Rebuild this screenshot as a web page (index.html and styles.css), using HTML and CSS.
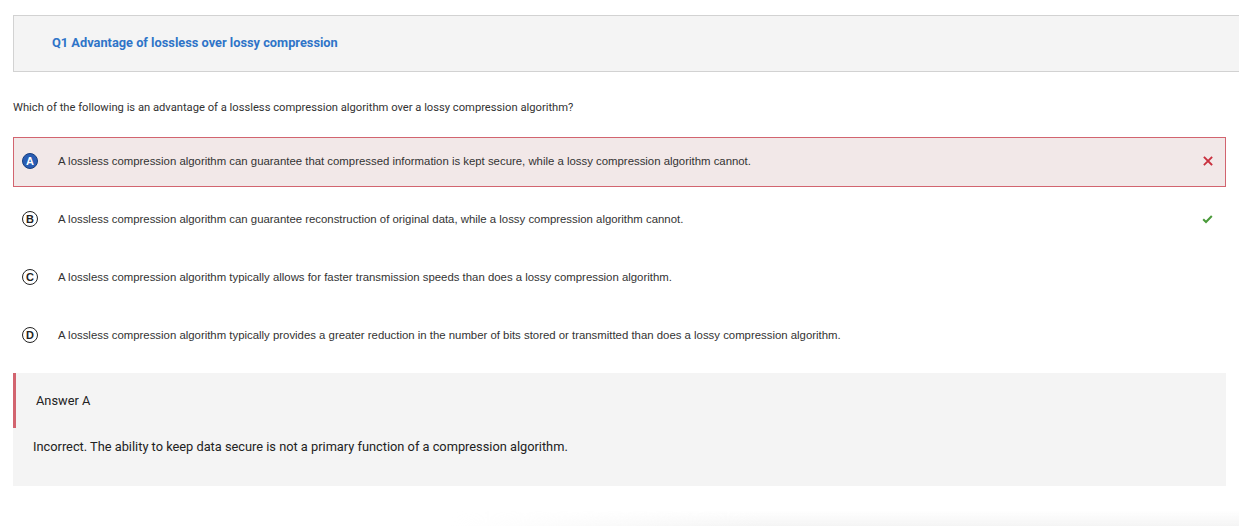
FILE: index.html
```html
<!DOCTYPE html>
<html>
<head>
<meta charset="utf-8">
<link rel="stylesheet" href="styles.css">
</head>
<body>
<div class="page">
  <div class="qhead"><span class="qtitle">Q1 Advantage of lossless over lossy compression</span></div>
  <p class="prompt">Which of the following is an advantage of a lossless compression algorithm over a lossy compression algorithm?</p>
  <div class="options">
    <div class="opt opt-wrong">
      <span class="badge badge-sel">A</span>
      <span class="otext">A lossless compression algorithm can guarantee that compressed information is kept secure, while a lossy compression algorithm cannot.</span>
      <svg class="mark" width="10" height="10" viewBox="0 0 10 10"><path d="M1.5 1.5 L8.5 8.5 M8.5 1.5 L1.5 8.5" stroke="#c9303e" stroke-width="1.8" stroke-linecap="square"/></svg>
    </div>
    <div class="opt">
      <span class="badge">B</span>
      <span class="otext">A lossless compression algorithm can guarantee reconstruction of original data, while a lossy compression algorithm cannot.</span>
      <svg class="mark" width="11" height="10" viewBox="0 0 11 10"><path d="M1.2 5.2 L4 8 L9.8 2" fill="none" stroke="#4a9a3a" stroke-width="2"/></svg>
    </div>
    <div class="opt">
      <span class="badge">C</span>
      <span class="otext">A lossless compression algorithm typically allows for faster transmission speeds than does a lossy compression algorithm.</span>
    </div>
    <div class="opt">
      <span class="badge">D</span>
      <span class="otext">A lossless compression algorithm typically provides a greater reduction in the number of bits stored or transmitted than does a lossy compression algorithm.</span>
    </div>
  </div>
  <div class="feedback">
    <div class="fb-head">Answer A</div>
    <div class="fb-body">Incorrect. The ability to keep data secure is not a primary function of a compression algorithm.</div>
  </div>
</div>
<div class="shade"></div>
</body>
</html>
```
FILE: styles.css
```css
html, body {
  margin: 0;
  padding: 0;
  background: #ffffff;
  overflow: hidden;
}
body {
  width: 1239px;
  height: 526px;
  position: relative;
}
.page {
  padding: 15px 13px 0 13px;
  font-family: Roboto, "Liberation Sans", sans-serif;
}
.qhead {
  height: 53px;
  padding-bottom: 2px;
  margin-right: -40px;
  border: 1px solid #d2d2d2;
  background: #f4f4f4;
  display: flex;
  align-items: center;
  padding-left: 38px;
}
.qtitle {
  color: #2f74c8;
  font-weight: 700;
  font-size: 12.8px;
}
.prompt {
  margin: 29px 0 0 0;
  font-size: 11.2px;
  line-height: 14px;
  color: #333333;
}
.options {
  margin-top: 22px;
  display: flex;
  flex-direction: column;
  gap: 8px;
}
.opt {
  height: 46px;
  padding: 0 11px 2px 8px;
  border: 1px solid transparent;
  display: flex;
  align-items: center;
  font-family: "Liberation Sans", Arial, sans-serif;
  font-size: 11.38px;
  color: #333333;
}
.opt-wrong {
  border-color: #d2646f;
  background: #f2e8e8;
}
.badge {
  width: 16px;
  height: 16px;
  border: 1px solid #222;
  border-radius: 50%;
  box-sizing: border-box;
  display: flex;
  align-items: center;
  justify-content: center;
  font-size: 11px;
  font-weight: 700;
  color: #222;
  flex: none;
  margin-right: 20px;
  line-height: 1;
}
.badge-sel {
  background: #2a5db3;
  border-color: #173f80;
  color: #ffffff;
}
.otext {
  flex: 1;
}
.mark {
  flex: none;
  margin-right: 1px;
}
.feedback {
  margin-top: 12px;
  background: #f4f4f4;
  height: 113px;
  font-size: 12.8px;
  color: #222222;
}
.fb-head {
  height: 55px;
  border-left: 3px solid #d2646f;
  padding-left: 20px;
  display: flex;
  align-items: center;
}
.fb-body {
  padding-left: 20px;
  margin-top: 12px;
  line-height: 14px;
}
.shade {
  position: absolute;
  left: 450px;
  right: 0;
  bottom: 0;
  height: 16px;
  background: linear-gradient(to bottom, rgba(255,255,255,0), rgba(236,236,236,0.55));
  -webkit-mask-image: linear-gradient(to right, transparent, black 40%);
  mask-image: linear-gradient(to right, transparent, black 40%);
}
```
